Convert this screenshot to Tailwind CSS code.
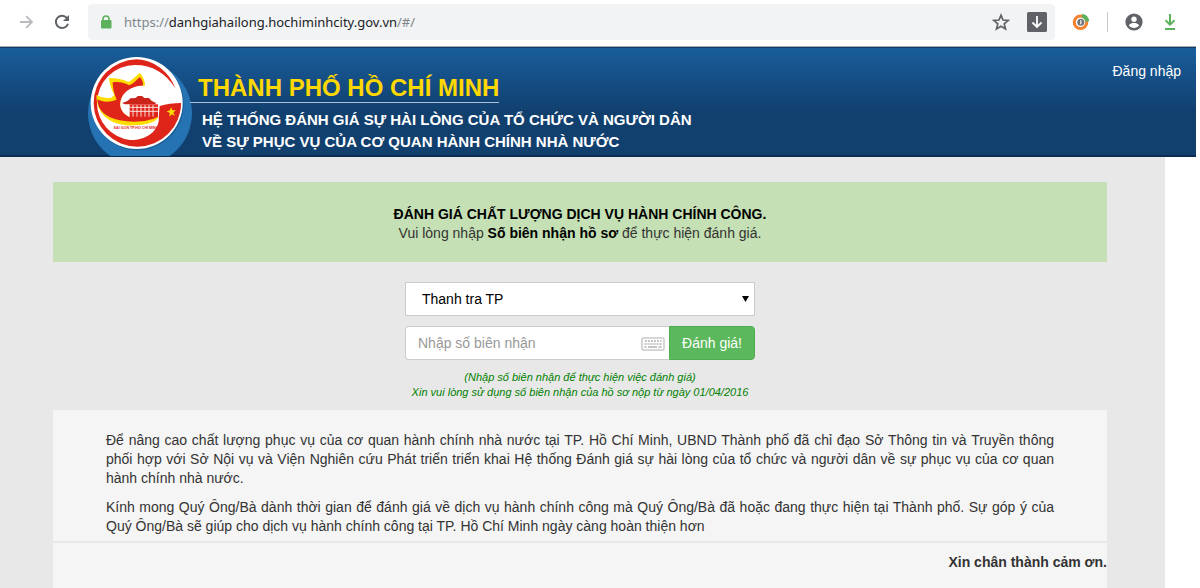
<!DOCTYPE html>
<html lang="vi">
<head>
<meta charset="utf-8">
<meta name="viewport" content="width=device-width, initial-scale=1">
<title>Đánh giá hài lòng - TP. Hồ Chí Minh</title>
<script src="https://cdn.jsdelivr.net/npm/@tailwindcss/browser@4"></script>
</head>
<body class="bg-white font-['Liberation_Sans',Arial,sans-serif] text-sm text-[#333]">
<div class="flex min-h-screen flex-col pr-1">

  <!-- Browser toolbar -->
  <div class="flex h-[47px] shrink-0 items-center border-b border-[#a9a9a9] pr-4 pb-[3px] pl-4">
    <button aria-label="Tiến" class="size-5">
      <svg class="size-5" viewBox="0 0 20 20" fill="none" stroke="#b9bbbe" stroke-width="1.8"><path d="M4 10h11.5M10.2 4.2 16 10l-5.800 5.800"/></svg>
    </button>
    <button aria-label="Tải lại" class="ml-4 size-5">
      <svg class="size-5" viewBox="0 0 20 20" fill="none" stroke="#5f6368" stroke-width="2"><path d="M15.200 6.300A6.200 6.200 0 1 0 16 11.800"/><path d="M17 3v6h-6z" fill="#5f6368" stroke="none"/></svg>
    </button>
    <div class="ml-4 flex h-9 flex-1 items-center rounded bg-[#f1f3f4] pr-2 pl-3">
      <svg class="h-3.5 w-3" viewBox="0 0 12 14"><path d="M3 6V4a3 3 0 0 1 6 0v2" fill="none" stroke="#5cb25c" stroke-width="1.600"/><rect x="1" y="5" width="10.500" height="8.500" rx="1" fill="#5cb25c"/></svg>
      <a href="#/" class="ml-3 flex-1 font-['Noto_Sans',sans-serif] text-[13px] leading-5 text-[#80868b]">https://<span class="text-[#202124]">danhgiahailong.hochiminhcity.gov.vn</span>/#/</a>
      <button aria-label="Đánh dấu trang" class="size-[18px]">
        <svg class="size-[18px]" viewBox="0 0 18 18" fill="none" stroke="#5f6368" stroke-width="1.700" stroke-linejoin="miter"><path d="M9 2.200l2 4.800 5.200.4-4 3.400 1.300 5.100L9 13.200l-4.500 2.700 1.300-5.100-4-3.400L7 7z"/></svg>
      </button>
      <button aria-label="Tải xuống trang" class="ml-[17px] size-5">
        <svg class="size-5" viewBox="0 0 20 20"><rect width="20" height="20" rx="1.500" fill="#5f6368"/><path d="M10 4v11M5.500 10.500 10 15l4.500-4.500" fill="none" stroke="#fff" stroke-width="1.800"/></svg>
      </button>
    </div>
    <button aria-label="Tiện ích" class="ml-4 size-5">
      <svg class="size-5" viewBox="0 0 20 20" fill="none"><circle cx="9.500" cy="10.300" r="6.200" stroke="#f58231" stroke-width="3.200"/><path d="M11 3.600A7 7 0 0 1 16.300 9.500" stroke="#5cb25c" stroke-width="4"/><circle cx="9.500" cy="10.300" r="4.600" fill="#fff"/><circle cx="9.800" cy="10.300" r="3.500" fill="#707478"/><path d="M9.800 8.300v4" stroke="#e2e2e2" stroke-width="1.500"/></svg>
    </button>
    <span class="ml-4 h-5 w-px bg-[#c8cacd]"></span>
    <button aria-label="Hồ sơ" class="ml-4 size-5">
      <svg class="size-5" viewBox="0 0 20 20"><circle cx="10" cy="10" r="8.600" fill="#5f6368"/><circle cx="10" cy="7.200" r="2.700" fill="#fff"/><path d="M4.800 13.200c1-1.600 3.400-2.200 5.200-2.200s4.200.6 5.200 2.200c-1.200 1.800-3.200 2.700-5.200 2.700s-4-.9-5.200-2.700z" fill="#fff"/></svg>
    </button>
    <button aria-label="Tải xuống" class="ml-4 size-5">
      <svg class="size-5" viewBox="0 0 20 20" fill="none" stroke="#5cb25c" stroke-width="2"><path d="M10 2v10.500M5.500 8.200 10 12.700l4.500-4.500M5 17h10"/></svg>
    </button>
  </div>

  <!-- Site banner -->
  <header class="flex h-[110px] shrink-0 items-start border-t border-b-2 border-t-[#0f3d6b] border-b-[#0b2c50] bg-linear-to-b from-[#195d9b] from-0% via-[#11406f] via-60% to-[#11406f] pr-[15px] pl-[88px]">
    <svg class="h-[108px] w-[104px] shrink-0" viewBox="24 9 312 324" role="img" aria-label="Thành phố Hồ Chí Minh">
      <circle cx="180" cy="205" r="156" fill="#2573b3"/>
      <circle cx="173" cy="178" r="138" fill="#0f3a66" opacity=".35"/>
      <circle cx="170" cy="174" r="138" fill="#fff"/>
      <path d="M286 130A130 130 0 0 0 170 43A131 131 0 1 0 303 174L236 210C243 250 206 287 150 285A112 112 0 0 1 51 174A114 114 0 0 1 166 60C216 60 258 84 286 130Z" fill="#df2419"/>
      <path d="M49 150C64 158 80 160 94 158L103 150C93 132 88 115 87 99C110 99 130 103 145 111C155 107 168 92 180 84C189 95 196 108 195 122C180 126 165 126 150 134C125 150 119 185 148 214L236 214C232 226 216 234 199 237C165 243 138 243 114 236C76 226 49 198 49 150Z" fill="#ffdc00"/>
      <path d="M52 163C68 172 90 172 110 164C102 147 98 130 98 112C118 109 133 113 148 121C160 116 169 105 180 96C187 105 190 113 189 122C155 124 121 146 121 178C121 196 133 209 149 216L236 214C210 231 158 234 119 226C79 218 54 199 52 163Z" fill="#df2419"/>
      <path d="M121 178C121 146 150 122 190 122C222 124 238 146 238 176V216H149C133 209 121 196 121 178Z" fill="#fff"/>
      <path d="M126 174C140 171 146 166 151 160L166 159L174 153H186L193 159H207C212 166 218 171 229 174L224 178H135Z" fill="#cb241b"/>
      <path d="M149 178H234V216H149Z" fill="#df2419"/>
      <path d="M159 180v35M171 180v35M183 180v35M195 180v35M207 180v35M219 180v35M149 187h85M149 199h85" stroke="#fff" stroke-width="2.500"/>
      <path d="M239 183C257 177 283 174 303 174C303 197 296 220 283 240L236 220Z" fill="#df2419"/>
      <path d="M273 186l4 10 10-1-7 8 5 10-9-5-8 7 1-11-9-5 10-3z" fill="#ffdc00"/>
      <text x="168" y="251" text-anchor="middle" font-family="Liberation Sans, sans-serif" font-size="11" font-weight="700" fill="#df2419">SAI GON TP.HỒ CHÍ MINH</text>
    </svg>
    <div class="flex-1 pt-[26px]">
      <h1 class="-ml-0.5 w-fit border-b border-[#a8bfd6] pl-2 text-2xl leading-7 font-bold text-[#ffd800]">THÀNH PHỐ HỒ CHÍ MINH</h1>
      <p class="pt-1.5 pl-2.5 text-[15px] leading-[22px] font-bold text-white">HỆ THỐNG ĐÁNH GIÁ SỰ HÀI LÒNG CỦA TỔ CHỨC VÀ NGƯỜI DÂN<br>VỀ SỰ PHỤC VỤ CỦA CƠ QUAN HÀNH CHÍNH NHÀ NƯỚC</p>
    </div>
    <a href="#/login" class="pt-[13px] leading-5 text-white">Đăng nhập</a>
  </header>

  <!-- Page content -->
  <main class="mr-[31px] flex flex-1 flex-col bg-[#e8e8e8] pt-[25px] pr-[58px] pl-[53px]">
    <section class="flex h-20 flex-col items-center justify-center bg-[#c5e0b4] pt-1 text-center leading-[19px]">
      <h2 class="font-bold text-black">ĐÁNH GIÁ CHẤT LƯỢNG DỊCH VỤ HÀNH CHÍNH CÔNG.</h2>
      <p>Vui lòng nhập <strong class="text-black">Số biên nhận hồ sơ</strong> để thực hiện đánh giá.</p>
    </section>

    <form class="mx-auto mt-5 w-[350px]">
      <div class="relative">
        <select aria-label="Cơ quan" class="block h-[34px] w-full appearance-none border border-[#ccc] bg-white pl-4 text-black">
          <option>Thanh tra TP</option>
        </select>
        <svg class="pointer-events-none absolute top-3.5 right-1.5 h-1.5 w-[7px]" viewBox="0 0 7 6"><path d="M0 0h7L3.500 6z" fill="#000"/></svg>
      </div>
      <div class="mt-2.5 flex h-[34px]">
        <div class="flex min-w-0 flex-1 items-center rounded-l border border-r-0 border-[#ccc] bg-white pr-1 pl-3">
          <input aria-label="Số biên nhận" type="text" placeholder="Nhập số biên nhận" class="min-w-0 flex-1 outline-none placeholder:text-[#999]">
          <svg class="mt-0.5 h-3.5 w-6" viewBox="0 0 24 14" fill="none"><rect x="1" y="1" width="22" height="12" rx="1" fill="#fff" stroke="#c9c9c9" stroke-width="1.500"/><path d="M4 4h16.500" stroke="#c4c4c4" stroke-width="2" stroke-dasharray="2 1"/><path d="M3.500 7h17" stroke="#c4c4c4" stroke-width="2" stroke-dasharray="2 1"/><path d="M3.500 10h2M7 10h9M17.500 10h3" stroke="#c4c4c4" stroke-width="2"/></svg>
        </div>
        <button type="button" class="rounded-r border border-[#4cae4c] bg-[#5cb85c] px-3 text-white">Đánh giá!</button>
      </div>
      <p class="mt-2.5 text-center text-[11px] leading-[15px] text-[#008000] italic">(Nhập số biên nhận để thực hiện việc đánh giá)<br>Xin vui lòng sử dụng số biên nhận của hồ sơ nộp từ ngày 01/04/2016</p>
    </form>

    <section class="mt-2.5 flex flex-1 flex-col bg-[#f5f5f5]">
      <div class="space-y-2.5 border-b-2 border-[#e8e8e8] px-[53px] pt-[21px] pb-[5px] text-justify leading-[19px]">
        <p>Để nâng cao chất lượng phục vụ của cơ quan hành chính nhà nước tại TP. Hồ Chí Minh, UBND Thành phố đã chỉ đạo Sở Thông tin và Truyền thông phối hợp với Sở Nội vụ và Viện Nghiên cứu Phát triển triển khai Hệ thống Đánh giá sự hài lòng của tổ chức và người dân về sự phục vụ của cơ quan hành chính nhà nước.</p>
        <p>Kính mong Quý Ông/Bà dành thời gian để đánh giá về dịch vụ hành chính công mà Quý Ông/Bà đã hoặc đang thực hiện tại Thành phố. Sự góp ý của Quý Ông/Bà sẽ giúp cho dịch vụ hành chính công tại TP. Hồ Chí Minh ngày càng hoàn thiện hơn</p>
      </div>
      <p class="pt-[9px] text-right leading-5 font-bold">Xin chân thành cảm ơn.</p>
    </section>
  </main>
</div>
</body>
</html>
